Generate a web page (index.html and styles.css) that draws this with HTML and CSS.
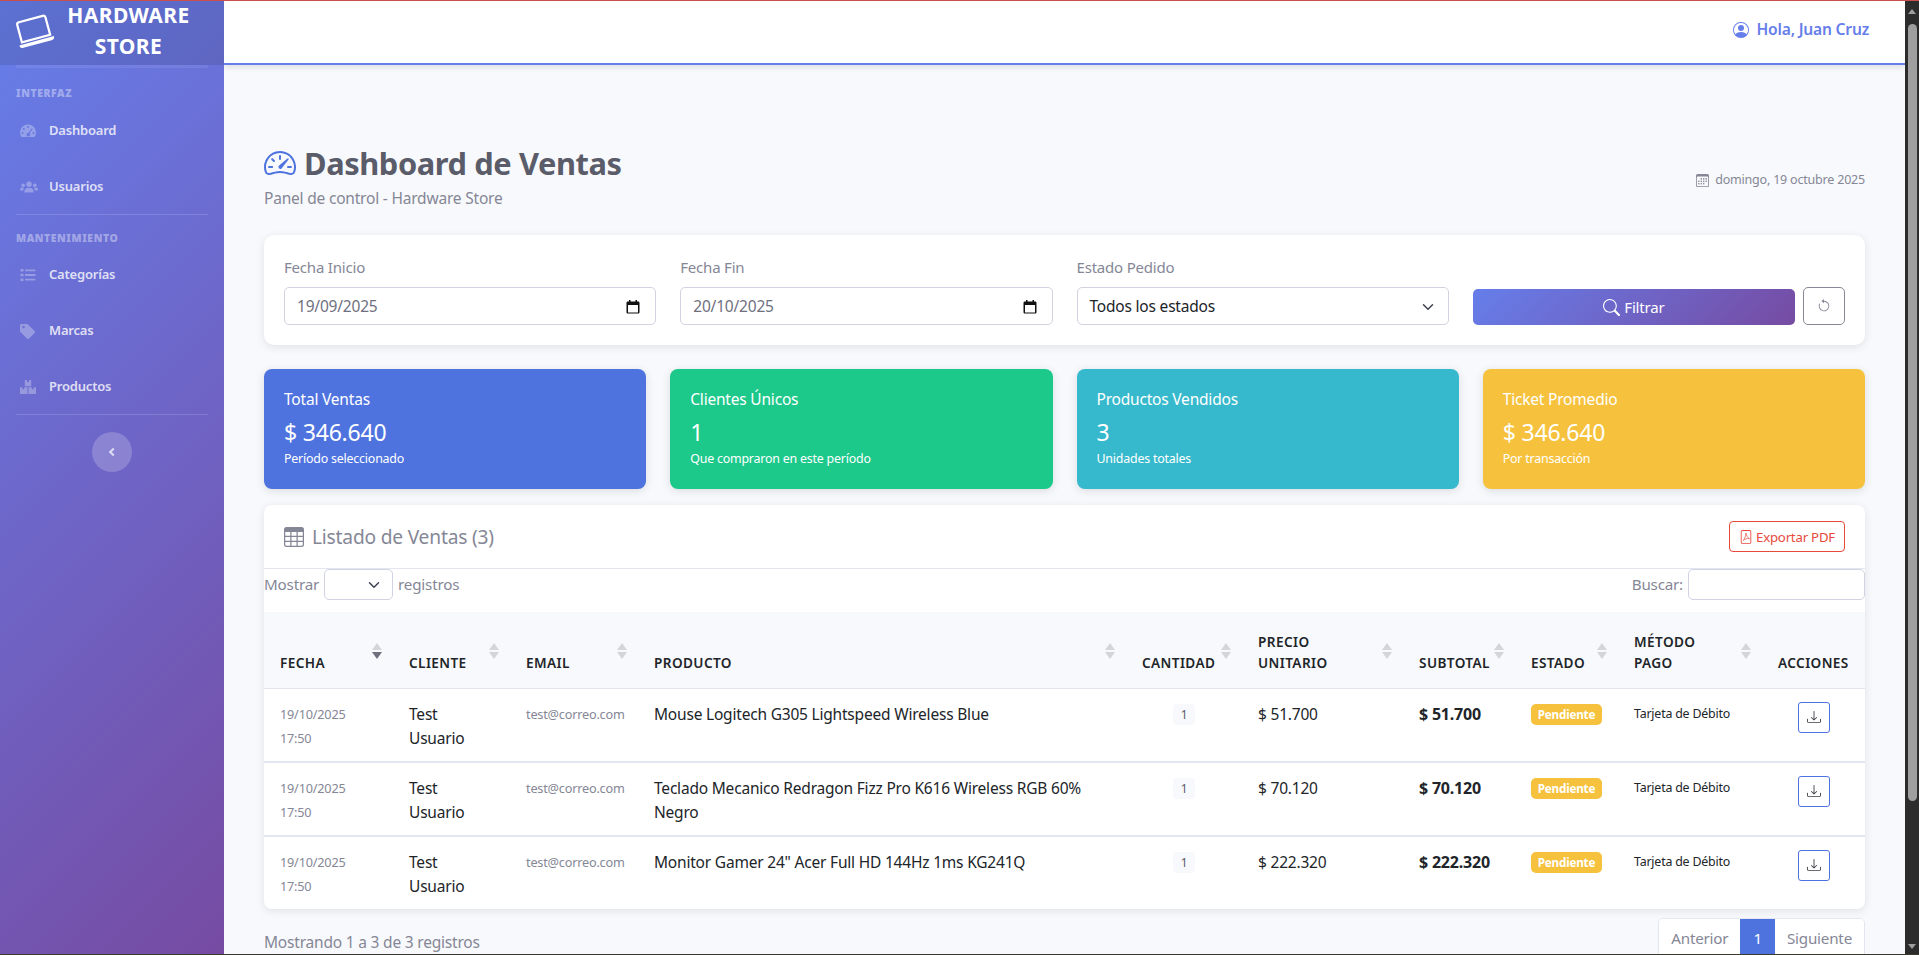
FILE: index.html
```html
<!DOCTYPE html>
<html lang="es">
<head>
    <meta charset="UTF-8">
    <meta name="viewport" content="width=device-width, initial-scale=1.0">
    <title>Dashboard de Ventas - Hardware Store</title>
    <link rel="stylesheet" href="styles.css">
</head>
<body>
    <div class="edge-top"></div>
    <div class="app">
        <aside class="sidebar">
            <div class="brand">
                <svg class="brand-icon" viewBox="0 0 16 16" fill="currentColor"><path d="M13.5 3a.5.5 0 0 1 .5.5V11H2V3.5a.5.5 0 0 1 .5-.5h11zm-11-1A1.5 1.5 0 0 0 1 3.5V12h14V3.5A1.5 1.5 0 0 0 13.5 2h-11zM0 12.5h16a1.5 1.5 0 0 1-1.5 1.5h-13A1.5 1.5 0 0 1 0 12.5z"/></svg>
                <div class="brand-text">HARDWARE STORE</div>
            </div>
            <hr class="side-line side-line-first">
            <div class="side-title">Interfaz</div>
            <a class="nav-item" href="#">
                <svg class="nav-icon" viewBox="0 0 16 16" fill="currentColor" fill-rule="evenodd"><path d="M8 1.5a8 8 0 0 0-8 8c0 1.5.4 2.9 1.1 4 .2.3.5.5.8.5h12.2c.3 0 .6-.2.8-.5.7-1.100 1.100-2.500 1.100-4a8 8 0 0 0-8-8zM8 3a1 1 0 1 1 0 2 1 1 0 0 1 0-2zM3.800 5a1 1 0 1 1 0 2 1 1 0 0 1 0-2zM2.500 9a1 1 0 1 1 0 2 1 1 0 0 1 0-2zm11 0a1 1 0 1 1 0 2 1 1 0 0 1 0-2zm-1.700-3.800.9.500L9.600 10.300a1.800 1.800 0 1 1-1-.5l3.200-4.600z"/></svg>
                <span>Dashboard</span>
            </a>
            <a class="nav-item" href="#">
                <svg class="nav-icon nav-icon-wide" viewBox="0 0 20 16" fill="currentColor"><circle cx="10" cy="5" r="3"/><circle cx="3.500" cy="6" r="2"/><circle cx="16.500" cy="6" r="2"/><path d="M5 14v-1.500C5 10.500 6.500 9 8 9h4c1.500 0 3 1.500 3 3.500V14zM0 12v-1.500C0 9.300 1 8.500 2 8.500h2.500C4 9.300 3.700 10.500 3.700 12zM20 12v-1.500c0-1.200-1-2-2-2h-2.500c.5.800.8 2 .8 3.500z"/></svg>
                <span>Usuarios</span>
            </a>
            <hr class="side-line">
            <div class="side-title">Mantenimiento</div>
            <a class="nav-item" href="#">
                <svg class="nav-icon" viewBox="0 0 16 16" fill="currentColor"><rect x="0.500" y="2" width="3" height="2.600" rx=".5"/><rect x="0.500" y="6.700" width="3" height="2.600" rx=".5"/><rect x="0.500" y="11.400" width="3" height="2.600" rx=".5"/><rect x="5" y="2.400" width="10.500" height="1.800" rx=".5"/><rect x="5" y="7.100" width="10.500" height="1.800" rx=".5"/><rect x="5" y="11.800" width="10.500" height="1.800" rx=".5"/></svg>
                <span>Categorías</span>
            </a>
            <a class="nav-item" href="#">
                <svg class="nav-icon" viewBox="0 0 16 16" fill="currentColor" fill-rule="evenodd"><path d="M0 2v6c0 .4.200.8.400 1l6.600 6.600c.6.600 1.500.6 2.100 0l5.500-5.500c.6-.6.600-1.500 0-2.100L8 1.400C7.800 1.100 7.400 1 7 1H1a1 1 0 0 0-1 1zm3.500 .8a1.200 1.200 0 1 1 0 2.400 1.200 1.200 0 0 1 0-2.400z"/></svg>
                <span>Marcas</span>
            </a>
            <a class="nav-item" href="#">
                <svg class="nav-icon" viewBox="0 0 16 16" fill="currentColor"><path d="M4.800 1H7v2h2V1h2.200v6.200H4.800zM0 8.300h2.400v2h1.800v-2h3.300v6.700H0zM8.500 8.300h3.300v2h1.800v-2H16V15H8.500z"/></svg>
                <span>Productos</span>
            </a>
            <hr class="side-line">
            <div class="toggle-wrap">
                <button class="side-toggle" type="button" aria-label="Contraer">
                    <svg viewBox="0 0 10 14" width="8" height="10" fill="none" stroke="currentColor" stroke-width="3"><path d="M7.500 2 2.500 7l5 5"/></svg>
                </button>
            </div>
        </aside>

        <div class="main">
            <header class="topbar">
                <svg class="user-icon" viewBox="0 0 16 16" fill="currentColor"><path d="M11 6a3 3 0 1 1-6 0 3 3 0 0 1 6 0z"/><path fill-rule="evenodd" d="M0 8a8 8 0 1 1 16 0A8 8 0 0 1 0 8zm8-7a7 7 0 0 0-5.468 11.370C3.242 11.226 4.805 10 8 10s4.757 1.225 5.468 2.370A7 7 0 0 0 8 1z"/></svg>
                <span class="user-name">Hola, Juan Cruz</span>
            </header>

            <div class="content">
                <div class="page-head">
                    <div>
                        <h1 class="page-title">
                            <svg class="title-icon" viewBox="0 0 16 16" fill="currentColor"><path d="M8 4a.5.5 0 0 1 .5.5V6a.5.5 0 0 1-1 0V4.500A.5.5 0 0 1 8 4zM3.732 5.732a.5.5 0 0 1 .707 0l.915.914a.5.5 0 1 1-.708.708l-.914-.915a.5.5 0 0 1 0-.707zM2 10a.5.5 0 0 1 .5-.5h1.586a.5.5 0 0 1 0 1H2.500A.5.5 0 0 1 2 10zm9.500 0a.5.5 0 0 1 .5-.5h1.500a.5.5 0 0 1 0 1H12a.5.5 0 0 1-.5-.5zm.754-4.246a.389.389 0 0 0-.527-.02L7.547 9.310a.91.91 0 1 0 1.302 1.258l3.434-4.297a.389.389 0 0 0-.029-.518z"/><path fill-rule="evenodd" d="M0 10a8 8 0 1 1 15.547 2.661c-.442 1.253-1.845 1.602-2.932 1.250C11.309 13.488 9.475 13 8 13c-1.474 0-3.310.488-4.615.911-1.087.352-2.490.003-2.932-1.250A7.988 7.988 0 0 1 0 10zm8-7a7 7 0 0 0-6.603 9.329c.203.575.923.876 1.680.630C4.397 12.533 6.358 12 8 12s3.604.532 4.923.96c.757.245 1.477-.056 1.680-.631A7 7 0 0 0 8 3z"/></svg>
                            Dashboard de Ventas
                        </h1>
                        <p class="page-sub">Panel de control - Hardware Store</p>
                    </div>
                    <div class="page-date">
                        <svg class="date-icon" viewBox="0 0 16 16" fill="currentColor"><path d="M14 0H2a2 2 0 0 0-2 2v12a2 2 0 0 0 2 2h12a2 2 0 0 0 2-2V2a2 2 0 0 0-2-2zM1 3.857C1 3.384 1.448 3 2 3h12c.552 0 1 .384 1 .857v10.286c0 .473-.448.857-1 .857H2c-.552 0-1-.384-1-.857V3.857z"/><path d="M6.500 7a1 1 0 1 0 0-2 1 1 0 0 0 0 2zm3 0a1 1 0 1 0 0-2 1 1 0 0 0 0 2zm3 0a1 1 0 1 0 0-2 1 1 0 0 0 0 2zm-9 3a1 1 0 1 0 0-2 1 1 0 0 0 0 2zm3 0a1 1 0 1 0 0-2 1 1 0 0 0 0 2zm3 0a1 1 0 1 0 0-2 1 1 0 0 0 0 2zm3 0a1 1 0 1 0 0-2 1 1 0 0 0 0 2zm-9 3a1 1 0 1 0 0-2 1 1 0 0 0 0 2zm3 0a1 1 0 1 0 0-2 1 1 0 0 0 0 2zm3 0a1 1 0 1 0 0-2 1 1 0 0 0 0 2z"/></svg>
                        <span>domingo, 19 octubre 2025</span>
                    </div>
                </div>

                <section class="filter-card">
                    <div class="filter-field">
                        <label class="filter-label">Fecha Inicio</label>
                        <div class="fake-input">
                            <span>19/09/2025</span>
                            <svg class="cal-icon" viewBox="0 0 14 14"><path d="M3 0h1.500v1.500h5V0H11v1.500h1.200c.7 0 1.300.6 1.300 1.300v9.400c0 .7-.6 1.300-1.300 1.300H1.800c-.7 0-1.300-.6-1.300-1.300V2.800c0-.7.600-1.300 1.300-1.300H3zM2 5v7.500h10V5z" fill-rule="evenodd"/></svg>
                        </div>
                    </div>
                    <div class="filter-field">
                        <label class="filter-label">Fecha Fin</label>
                        <div class="fake-input">
                            <span>20/10/2025</span>
                            <svg class="cal-icon" viewBox="0 0 14 14"><path d="M3 0h1.500v1.500h5V0H11v1.500h1.200c.7 0 1.300.6 1.300 1.300v9.400c0 .7-.6 1.300-1.300 1.300H1.800c-.7 0-1.300-.6-1.300-1.300V2.800c0-.7.600-1.300 1.300-1.300H3zM2 5v7.500h10V5z" fill-rule="evenodd"/></svg>
                        </div>
                    </div>
                    <div class="filter-field">
                        <label class="filter-label">Estado Pedido</label>
                        <div class="fake-input fake-select">
                            <span>Todos los estados</span>
                            <svg class="chev-icon" viewBox="0 0 16 16" fill="none" stroke="currentColor" stroke-width="2" stroke-linecap="round" stroke-linejoin="round"><path d="m2 5 6 6 6-6"/></svg>
                        </div>
                    </div>
                    <div class="filter-actions">
                        <button class="btn-filter" type="button">
                            <svg viewBox="0 0 16 16" width="17" height="17" fill="currentColor"><path d="M11.742 10.344a6.500 6.500 0 1 0-1.397 1.398h-.001c.03.04.062.078.098.115l3.850 3.850a1 1 0 0 0 1.415-1.414l-3.850-3.850a1.007 1.007 0 0 0-.115-.1zM12 6.500a5.500 5.500 0 1 1-11 0 5.500 5.500 0 0 1 11 0z"/></svg>
                            Filtrar
                        </button>
                        <button class="btn-reset" type="button" aria-label="Limpiar">
                            <svg viewBox="0 0 16 16" width="14" height="14" fill="currentColor"><path fill-rule="evenodd" d="M8 3a5 5 0 1 1-4.546 2.914.5.5 0 0 0-.908-.417A6 6 0 1 0 8 2v1z"/><path d="M8 4.466V.534a.25.25 0 0 0-.41-.192L5.230 2.308a.25.25 0 0 0 0 .384l2.360 1.966A.25.25 0 0 0 8 4.466z"/></svg>
                        </button>
                    </div>
                </section>

                <section class="stats">
                    <div class="stat stat-blue">
                        <div class="stat-label">Total Ventas</div>
                        <div class="stat-value">$ 346.640</div>
                        <div class="stat-note">Período seleccionado</div>
                    </div>
                    <div class="stat stat-green">
                        <div class="stat-label">Clientes Únicos</div>
                        <div class="stat-value">1</div>
                        <div class="stat-note">Que compraron en este período</div>
                    </div>
                    <div class="stat stat-cyan">
                        <div class="stat-label">Productos Vendidos</div>
                        <div class="stat-value">3</div>
                        <div class="stat-note">Unidades totales</div>
                    </div>
                    <div class="stat stat-yellow">
                        <div class="stat-label">Ticket Promedio</div>
                        <div class="stat-value">$ 346.640</div>
                        <div class="stat-note">Por transacción</div>
                    </div>
                </section>

                <section class="sales-card">
                    <div class="sales-head">
                        <h2 class="sales-title">
                            <svg class="table-icon" viewBox="0 0 16 16" fill="currentColor"><path d="M0 2a2 2 0 0 1 2-2h12a2 2 0 0 1 2 2v12a2 2 0 0 1-2 2H2a2 2 0 0 1-2-2V2zm15 2h-4v3h4V4zm0 4h-4v3h4V8zm0 4h-4v3h3a1 1 0 0 0 1-1v-2zm-5 3v-3H6v3h4zm-5 0v-3H1v2a1 1 0 0 0 1 1h3zm-4-4h4V8H1v3zm0-4h4V4H1v3zm5-3v3h4V4H6zm4 4H6v3h4V8z"/></svg>
                            Listado de Ventas (3)
                        </h2>
                        <button class="btn-pdf" type="button">
                            <svg viewBox="0 0 16 16" width="14" height="14" fill="currentColor"><path d="M4 0a2 2 0 0 0-2 2v12a2 2 0 0 0 2 2h8a2 2 0 0 0 2-2V2a2 2 0 0 0-2-2H4zm0 1h8a1 1 0 0 1 1 1v12a1 1 0 0 1-1 1H4a1 1 0 0 1-1-1V2a1 1 0 0 1 1-1z"/><path d="M8 3.500c.4 2.500 1.500 5 4 6.500-2.500-.5-5.500 0-7 2 1.500-2.500 3-5.500 3-8.500z" fill="none" stroke="currentColor" stroke-width=".8"/></svg>
                            Exportar PDF
                        </button>
                    </div>
                    <div class="table-tools">
                        <div class="tool-group">
                            <span>Mostrar</span>
                            <div class="mini-select">
                                <svg class="mini-chev" viewBox="0 0 16 16" fill="none" stroke="currentColor" stroke-width="2" stroke-linecap="round" stroke-linejoin="round"><path d="m2 5 6 6 6-6"/></svg>
                            </div>
                            <span>registros</span>
                        </div>
                        <div class="tool-group">
                            <span>Buscar:</span>
                            <input class="search-input" type="text">
                        </div>
                    </div>
                    <table class="sales-table">
                        <thead>
                            <tr>
                                <th class="col-fecha sort sort-desc">Fecha</th>
                                <th class="col-cliente sort">Cliente</th>
                                <th class="col-email sort">Email</th>
                                <th class="col-producto sort">Producto</th>
                                <th class="col-cantidad sort">Cantidad</th>
                                <th class="col-precio sort">Precio Unitario</th>
                                <th class="col-subtotal sort">Subtotal</th>
                                <th class="col-estado sort">Estado</th>
                                <th class="col-metodo sort">Método Pago</th>
                                <th class="col-acciones">Acciones</th>
                            </tr>
                        </thead>
                        <tbody>
                            <tr>
                                <td class="cell-small">19/10/2025<br>17:50</td>
                                <td>Test Usuario</td>
                                <td class="cell-small">test@correo.com</td>
                                <td>Mouse Logitech G305 Lightspeed Wireless Blue</td>
                                <td class="cell-center"><span class="qty">1</span></td>
                                <td>$ 51.700</td>
                                <td class="cell-strong">$ 51.700</td>
                                <td><span class="status">Pendiente</span></td>
                                <td class="cell-pay">Tarjeta de Débito</td>
                                <td class="cell-center"><button class="btn-down" type="button" aria-label="Descargar"><svg viewBox="0 0 16 16" width="14" height="14" fill="currentColor"><path d="M.5 9.900a.5.5 0 0 1 .5.5v2.500a1 1 0 0 0 1 1h12a1 1 0 0 0 1-1v-2.500a.5.5 0 0 1 1 0v2.500a2 2 0 0 1-2 2H2a2 2 0 0 1-2-2v-2.500a.5.5 0 0 1 .5-.5z"/><path d="M7.646 11.854a.5.5 0 0 0 .708 0l3-3a.5.5 0 0 0-.708-.708L8.500 10.293V1.500a.5.5 0 0 0-1 0v8.793L5.354 8.146a.5.5 0 1 0-.708.708l3 3z"/></svg></button></td>
                            </tr>
                            <tr>
                                <td class="cell-small">19/10/2025<br>17:50</td>
                                <td>Test Usuario</td>
                                <td class="cell-small">test@correo.com</td>
                                <td>Teclado Mecanico Redragon Fizz Pro K616 Wireless RGB 60% Negro</td>
                                <td class="cell-center"><span class="qty">1</span></td>
                                <td>$ 70.120</td>
                                <td class="cell-strong">$ 70.120</td>
                                <td><span class="status">Pendiente</span></td>
                                <td class="cell-pay">Tarjeta de Débito</td>
                                <td class="cell-center"><button class="btn-down" type="button" aria-label="Descargar"><svg viewBox="0 0 16 16" width="14" height="14" fill="currentColor"><path d="M.5 9.900a.5.5 0 0 1 .5.5v2.500a1 1 0 0 0 1 1h12a1 1 0 0 0 1-1v-2.500a.5.5 0 0 1 1 0v2.500a2 2 0 0 1-2 2H2a2 2 0 0 1-2-2v-2.500a.5.5 0 0 1 .5-.5z"/><path d="M7.646 11.854a.5.5 0 0 0 .708 0l3-3a.5.5 0 0 0-.708-.708L8.500 10.293V1.500a.5.5 0 0 0-1 0v8.793L5.354 8.146a.5.5 0 1 0-.708.708l3 3z"/></svg></button></td>
                            </tr>
                            <tr>
                                <td class="cell-small">19/10/2025<br>17:50</td>
                                <td>Test Usuario</td>
                                <td class="cell-small">test@correo.com</td>
                                <td>Monitor Gamer 24" Acer Full HD 144Hz 1ms KG241Q</td>
                                <td class="cell-center"><span class="qty">1</span></td>
                                <td>$ 222.320</td>
                                <td class="cell-strong">$ 222.320</td>
                                <td><span class="status">Pendiente</span></td>
                                <td class="cell-pay">Tarjeta de Débito</td>
                                <td class="cell-center"><button class="btn-down" type="button" aria-label="Descargar"><svg viewBox="0 0 16 16" width="14" height="14" fill="currentColor"><path d="M.5 9.900a.5.5 0 0 1 .5.5v2.500a1 1 0 0 0 1 1h12a1 1 0 0 0 1-1v-2.500a.5.5 0 0 1 1 0v2.500a2 2 0 0 1-2 2H2a2 2 0 0 1-2-2v-2.500a.5.5 0 0 1 .5-.5z"/><path d="M7.646 11.854a.5.5 0 0 0 .708 0l3-3a.5.5 0 0 0-.708-.708L8.500 10.293V1.500a.5.5 0 0 0-1 0v8.793L5.354 8.146a.5.5 0 1 0-.708.708l3 3z"/></svg></button></td>
                            </tr>
                        </tbody>
                    </table>
                </section>

                <div class="table-foot">
                    <span class="foot-info">Mostrando 1 a 3 de 3 registros</span>
                    <div class="pager">
                        <a class="pager-item" href="#">Anterior</a>
                        <a class="pager-item pager-on" href="#">1</a>
                        <a class="pager-item" href="#">Siguiente</a>
                    </div>
                </div>
            </div>
        </div>

        <div class="scrollbar">
            <span class="scroll-up"></span>
            <div class="scroll-track"><div class="scroll-thumb"></div></div>
            <span class="scroll-down"></span>
        </div>
    </div>
</body>
</html>
```

FILE: styles.css
```css
/* Reset básico */
* {
    margin: 0;
    padding: 0;
    box-sizing: border-box;
}

html, body {
    height: 100%;
    overflow: hidden;
}

body {
    font-family: "Noto Sans", sans-serif;
    font-size: 14px;
    letter-spacing: -0.2px;
    line-height: 1.5;
    color: #212529;
    background-color: #f8f9fc;
    display: flex;
    flex-direction: column;
}

.edge-top {
    height: 1px;
    flex: none;
    background-color: #c94f4f;
}

.app {
    flex: 1;
    min-height: 0;
    display: flex;
    border-bottom: 1px solid #3a3a2e;
}

/* Sidebar */
.sidebar {
    width: 224px;
    flex: none;
    background: linear-gradient(135deg, #667eea 0%, #764ba2 100%);
    color: rgba(255, 255, 255, 0.8);
}

.brand {
    height: 64px;
    display: flex;
    align-items: center;
    padding: 0 21px 4px 16px;
    gap: 2px;
    background-color: rgba(0, 0, 0, 0.1);
    color: #fff;
}

.brand-icon {
    width: 36px;
    height: 36px;
    flex: none;
    transform: rotate(-15deg);
}

.brand-text {
    flex: 1;
    text-align: center;
    font-size: 21px;
    font-weight: 700;
    line-height: 31px;
    letter-spacing: 0.4px;
}

.side-line {
    border: 0;
    border-top: 1px solid rgba(255, 255, 255, 0.15);
    margin: 0 16px;
}

.side-line-first {
    border-top-width: 3px;
    border-top-color: rgba(255, 255, 255, 0.08);
}

.side-title {
    padding: 15px 16px 0;
    height: 31px;
    font-size: 10.4px;
    line-height: 16px;
    font-weight: 900;
    text-transform: uppercase;
    letter-spacing: 0.6px;
    color: rgba(255, 255, 255, 0.4);
}

.side-line-first + .side-title {
    padding-top: 17px;
    height: 34px;
}

.nav-item {
    height: 56px;
    display: flex;
    align-items: center;
    padding: 2px 0 0 20px;
    color: rgba(255, 255, 255, 0.8);
    text-decoration: none;
    font-size: 13px;
    font-weight: 600;
}

.nav-icon {
    width: 16px;
    height: 16px;
    flex: none;
    margin-right: 13px;
    color: rgba(255, 255, 255, 0.3);
}

.nav-icon-wide {
    width: 18px;
    margin-right: 11px;
}

.toggle-wrap {
    display: flex;
    justify-content: center;
    padding-top: 17px;
}

.side-toggle {
    width: 40px;
    height: 40px;
    border: 0;
    border-radius: 50%;
    background-color: rgba(255, 255, 255, 0.2);
    color: rgba(255, 255, 255, 0.7);
    display: flex;
    align-items: center;
    justify-content: center;
}

/* Área principal */
.main {
    flex: 1;
    min-width: 0;
    overflow: hidden;
    display: flex;
    flex-direction: column;
}

.topbar {
    height: 64px;
    flex: none;
    background-color: #fff;
    border-bottom: 2px solid #667eea;
    box-shadow: 0 2px 6px rgba(58, 59, 69, 0.15);
    display: flex;
    align-items: center;
    justify-content: flex-end;
    gap: 8px;
    padding: 0 36px 5px 0;
    color: #667eea;
}

.user-icon {
    width: 16px;
    height: 16px;
}

.user-name {
    font-size: 15.6px;
    font-weight: 600;
}

.content {
    flex: 1;
    padding: 69px 40px 0;
}

.page-head {
    display: flex;
    justify-content: space-between;
    align-items: center;
    height: 85px;
    margin-bottom: 16px;
}

.page-title {
    font-size: 30.8px;
    line-height: 42px;
    font-weight: 700;
    color: #5a5c69;
    display: flex;
    align-items: center;
    gap: 8px;
    letter-spacing: -0.4px;
}

.title-icon {
    width: 32px;
    height: 32px;
    color: #4e73df;
}

.page-sub {
    font-size: 15.5px;
    color: #858796;
    line-height: 25px;
    margin-top: 2px;
}

.page-date {
    display: flex;
    align-items: center;
    gap: 6px;
    margin-top: 8px;
    font-size: 12.5px;
    color: #858796;
}

.date-icon {
    width: 13px;
    height: 13px;
}

/* Filtros */
.filter-card {
    display: grid;
    grid-template-columns: repeat(4, 1fr);
    gap: 24px;
    align-items: end;
    height: 110px;
    padding: 20px 20px 20px;
    margin-bottom: 24px;
    background-color: #fff;
    border-radius: 10px;
    box-shadow: 0 2px 8px rgba(58, 59, 69, 0.12);
}

.filter-label {
    display: block;
    font-size: 15px;
    color: #858796;
    line-height: 22px;
    margin-bottom: 9px;
}

.fake-input {
    height: 38px;
    display: flex;
    align-items: center;
    justify-content: space-between;
    padding: 1px 12px 0;
    border: 1px solid #d1d3e2;
    border-radius: 5px;
    font-size: 15.5px;
    color: #6e707e;
    background-color: #fff;
}

.fake-select {
    color: #212529;
}

.cal-icon {
    width: 14px;
    height: 14px;
    margin-right: 3px;
    fill: #111;
}

.chev-icon {
    width: 12px;
    height: 12px;
    margin-right: 2px;
    color: #3f4254;
}

.filter-actions {
    display: flex;
    gap: 8px;
    align-items: flex-end;
}

.btn-filter {
    flex: 1;
    height: 36px;
    border: 0;
    border-radius: 5px;
    background: linear-gradient(135deg, #667eea 0%, #764ba2 100%);
    color: #fff;
    font-family: inherit;
    font-size: 15px;
    letter-spacing: -0.2px;
    display: flex;
    align-items: center;
    justify-content: center;
    gap: 4px;
}

.btn-reset {
    width: 42px;
    height: 38px;
    border: 1px solid #858796;
    border-radius: 5px;
    background-color: #fff;
    color: #858796;
    display: flex;
    align-items: center;
    justify-content: center;
}

/* Tarjetas */
.stats {
    display: grid;
    grid-template-columns: repeat(4, 1fr);
    gap: 24px;
    margin-bottom: 16px;
}

.stat {
    height: 120px;
    padding: 19px 20px;
    border-radius: 8px;
    color: #fff;
    box-shadow: 0 2px 8px rgba(58, 59, 69, 0.15);
}

.stat-blue { background-color: #4e73df; }
.stat-green { background-color: #1cc88a; }
.stat-cyan { background-color: #36b9cc; }
.stat-yellow { background-color: #f6c23e; }

.stat-label {
    font-size: 15.5px;
    line-height: 22px;
}

.stat-value {
    font-size: 23px;
    line-height: 34px;
    margin-top: 5px;
}

.stat-note {
    font-size: 12.4px;
    line-height: 20px;
}

/* Tabla */
.sales-card {
    background-color: #fff;
    border-radius: 8px;
    box-shadow: 0 2px 8px rgba(58, 59, 69, 0.12);
}

.sales-head {
    height: 64px;
    display: flex;
    align-items: center;
    justify-content: space-between;
    padding: 0 20px;
    border-bottom: 1px solid #e3e6f0;
}

.sales-title {
    font-size: 19.2px;
    font-weight: 400;
    color: #858796;
    display: flex;
    align-items: center;
    gap: 8px;
    padding-top: 1px;
}

.table-icon {
    width: 20px;
    height: 20px;
}

.btn-pdf {
    width: 116px;
    height: 31px;
    background-color: #fff;
    border: 1px solid #e74a3b;
    border-radius: 4px;
    color: #e74a3b;
    font-family: inherit;
    font-size: 13.2px;
    letter-spacing: -0.2px;
    display: flex;
    align-items: center;
    justify-content: center;
    gap: 3px;
}

.table-tools {
    display: flex;
    justify-content: space-between;
    align-items: flex-start;
    height: 43px;
    font-size: 15.2px;
    color: #858796;
}

.tool-group {
    display: flex;
    align-items: center;
    gap: 5px;
}

.mini-select {
    width: 69px;
    height: 31px;
    border: 1px solid #d1d3e2;
    border-radius: 5px;
    display: flex;
    align-items: center;
    justify-content: flex-end;
    padding-right: 12px;
}

.mini-chev {
    width: 12px;
    height: 12px;
    color: #3f4254;
}

.search-input {
    width: 177px;
    height: 31px;
    border: 1px solid #d1d3e2;
    border-radius: 5px;
    background-color: #fff;
}

.sales-table {
    width: 100%;
    table-layout: fixed;
    border-collapse: collapse;
    font-size: 15.5px;
    line-height: 24.5px;
}

.sales-table th {
    position: relative;
    height: 76px;
    padding: 0 16px 15px;
    vertical-align: bottom;
    text-align: left;
    background-color: #f8f9fc;
    border-bottom: 1px solid #e3e6f0;
    text-transform: uppercase;
    font-size: 13.6px;
    font-weight: 600;
    line-height: 21px;
    letter-spacing: 0.4px;
    color: #212529;
}

.sales-table th.sort {
    padding-right: 30px;
}

/* Flechas de orden */
.sort::before,
.sort::after {
    content: "";
    position: absolute;
    right: 11px;
    border-left: 5px solid transparent;
    border-right: 5px solid transparent;
}

.sort::before {
    top: 31px;
    border-bottom: 7px solid #d4d5da;
}

.sort::after {
    top: 40px;
    border-top: 7px solid #d4d5da;
}

.sort-desc::after {
    border-top-color: #6e707e;
}

.col-fecha { width: 129px; }
.col-cliente { width: 117px; }
.col-email { width: 128px; }
.col-producto { width: 488px; }
.col-cantidad { width: 116px; }
.col-precio { width: 161px; }
.col-subtotal { width: 112px; }
.col-estado { width: 103px; }
.col-metodo { width: 144px; }
.col-acciones { width: 103px; }

.sales-table td {
    padding: 13px 16px 10px;
    vertical-align: top;
    border-bottom: 2px solid #e3e6f0;
}

.sales-table tbody tr:last-child td {
    border-bottom: 0;
}

.sales-table .cell-small {
    font-size: 12.7px;
    color: #858796;
}

.cell-center {
    text-align: center;
}

.cell-strong {
    font-weight: 700;
    font-size: 16px;
}

.sales-table .cell-pay {
    font-size: 12.4px;
}

.qty {
    display: inline-block;
    min-width: 22px;
    height: 21px;
    margin-top: 2px;
    background-color: #f8f9fc;
    border-radius: 4px;
    font-size: 12px;
    line-height: 21px;
    color: #5a5c69;
    text-align: center;
    vertical-align: top;
}

.status {
    display: inline-block;
    width: 71px;
    height: 21px;
    margin-top: 2px;
    background-color: #f6c23e;
    border-radius: 5px;
    color: #fff;
    font-size: 11.7px;
    font-weight: 700;
    line-height: 21px;
    text-align: center;
    vertical-align: top;
}

.btn-down {
    width: 32px;
    height: 31px;
    background-color: #fff;
    border: 1px solid #4e73df;
    border-radius: 3px;
    color: #3a3b45;
    display: inline-flex;
    align-items: center;
    justify-content: center;
    vertical-align: top;
}

.table-foot {
    display: flex;
    justify-content: space-between;
    margin-top: 9px;
}

.foot-info {
    font-size: 15.5px;
    color: #858796;
    padding-top: 13px;
}

.pager {
    display: flex;
    height: 40px;
    border: 1px solid #e3e6f0;
    border-radius: 5px;
    overflow: hidden;
}

.pager-item {
    padding: 0 12px;
    font-size: 15.2px;
    line-height: 38px;
    color: #858796;
    text-decoration: none;
    background-color: #fff;
}

.pager-on {
    padding: 0 13px;
    background-color: #4e73df;
    color: #fff;
}

/* Barra de desplazamiento */
.scrollbar {
    width: 14px;
    flex: none;
    background-color: #2c2c2c;
    display: flex;
    flex-direction: column;
    align-items: center;
    padding: 8px 0 5px;
}

.scroll-up,
.scroll-down {
    width: 0;
    height: 0;
    flex: none;
    border-left: 4px solid transparent;
    border-right: 4px solid transparent;
}

.scroll-up {
    border-bottom: 5px solid #9f9f9f;
}

.scroll-down {
    border-top: 5px solid #9f9f9f;
}

.scroll-track {
    flex: 1;
    width: 100%;
    padding: 10px 2px 0 3px;
}

.scroll-thumb {
    height: 777px;
    background-color: #9f9f9f;
    border-radius: 5px;
}
```
